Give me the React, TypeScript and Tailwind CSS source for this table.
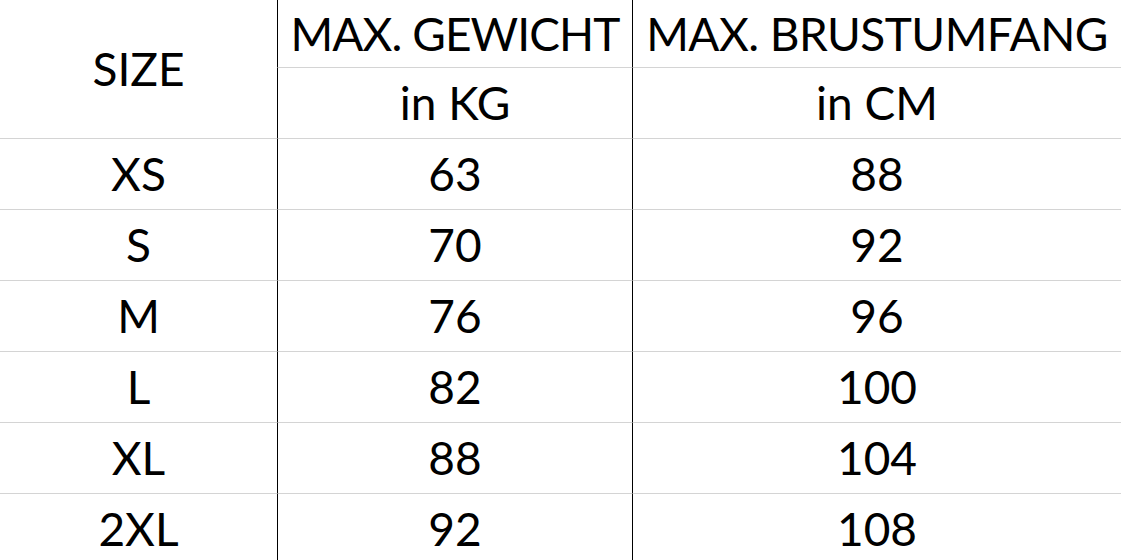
const rows = [
  ['XS', '63', '88'],
  ['S', '70', '92'],
  ['M', '76', '96'],
  ['L', '82', '100'],
  ['XL', '88', '104'],
  ['2XL', '92', '108'],
];

export default function App() {
  return (
    <div
      className="h-[560px] w-[1121px] overflow-hidden bg-white text-[46px] leading-none text-black"
      style={{ fontFamily: 'Lato, "Open Sans", sans-serif' }}
    >
      <div className="grid grid-cols-[277px_355px_489px] grid-rows-[68px_71px_71px_71px_71px_71px_71px_71px]">
        {/* header */}
        <div className="row-span-2 flex items-center justify-center border-b border-[#d4d4d4]">SIZE</div>
        <div className="flex items-center justify-center whitespace-nowrap border-b border-l border-b-[#d4d4d4] border-l-black tracking-[-0.02em]">
          MAX. GEWICHT
        </div>
        <div className="flex items-center justify-center whitespace-nowrap border-b border-l border-b-[#d4d4d4] border-l-black tracking-[-0.012em]">
          MAX. BRUSTUMFANG
        </div>
        <div className="flex items-center justify-center border-b border-l border-b-[#d4d4d4] border-l-black">in KG</div>
        <div className="flex items-center justify-center border-b border-l border-b-[#d4d4d4] border-l-black">in CM</div>

        {rows.map(([size, kg, cm]) => (
          <>
            <div key={size} className="flex items-center justify-center border-b border-[#d4d4d4]">{size}</div>
            <div className="flex items-center justify-center border-b border-l border-b-[#d4d4d4] border-l-black">{kg}</div>
            <div className="flex items-center justify-center border-b border-l border-b-[#d4d4d4] border-l-black">{cm}</div>
          </>
        ))}
      </div>
    </div>
  );
}
